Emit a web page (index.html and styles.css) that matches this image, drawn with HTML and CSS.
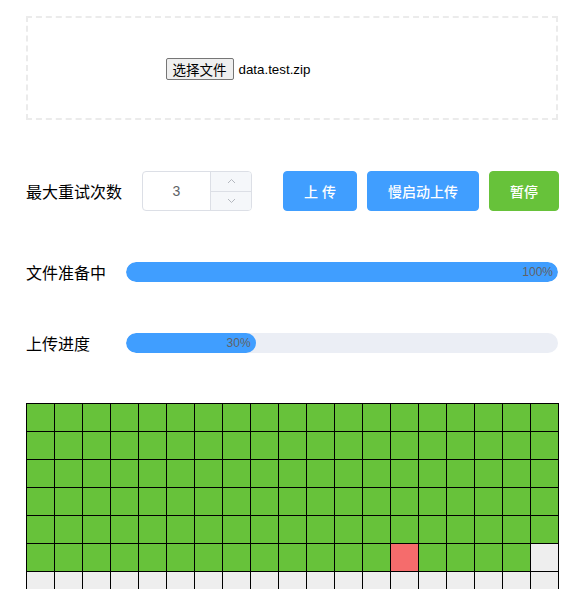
FILE: index.html
```html
<!DOCTYPE html>
<html lang="zh-CN">
<head>
<meta charset="utf-8">
<title>上传</title>
<link rel="stylesheet" href="styles.css">
</head>
<body>
<div class="page">
  <div class="upload">
    <div class="file">
      <span class="file-btn">选择文件</span><span class="file-name">data.test.zip</span>
    </div>
  </div>

  <div class="row ctrl-row">
    <span class="label">最大重试次数</span>
    <div class="num">
      <div class="num-val">3</div>
      <div class="num-ctrl">
        <div class="spin up"><svg width="9" height="6" viewBox="0 0 9 6"><path d="M1 5L4.5 1.5L8 5" fill="none" stroke="#b4b8bf" stroke-width="1"/></svg></div>
        <div class="spin down"><svg width="9" height="6" viewBox="0 0 9 6"><path d="M1 1L4.5 4.5L8 1" fill="none" stroke="#b4b8bf" stroke-width="1"/></svg></div>
      </div>
    </div>
    <div class="btns">
      <button class="btn primary">上 传</button>
      <button class="btn primary">慢启动上传</button>
      <button class="btn success">暂停</button>
    </div>
  </div>

  <div class="row prog-row">
    <span class="plabel">文件准备中</span>
    <div class="track"><div class="fill" style="width:100%"><span class="ptext">100%</span></div></div>
  </div>

  <div class="row prog-row">
    <span class="plabel">上传进度</span>
    <div class="track"><div class="fill" style="width:30%"><span class="ptext">30%</span></div></div>
  </div>

  <div class="grid">
    <i class="c ok"></i><i class="c ok"></i><i class="c ok"></i><i class="c ok"></i><i class="c ok"></i><i class="c ok"></i><i class="c ok"></i><i class="c ok"></i><i class="c ok"></i><i class="c ok"></i><i class="c ok"></i><i class="c ok"></i><i class="c ok"></i><i class="c ok"></i><i class="c ok"></i><i class="c ok"></i><i class="c ok"></i><i class="c ok"></i><i class="c ok"></i>
    <i class="c ok"></i><i class="c ok"></i><i class="c ok"></i><i class="c ok"></i><i class="c ok"></i><i class="c ok"></i><i class="c ok"></i><i class="c ok"></i><i class="c ok"></i><i class="c ok"></i><i class="c ok"></i><i class="c ok"></i><i class="c ok"></i><i class="c ok"></i><i class="c ok"></i><i class="c ok"></i><i class="c ok"></i><i class="c ok"></i><i class="c ok"></i>
    <i class="c ok"></i><i class="c ok"></i><i class="c ok"></i><i class="c ok"></i><i class="c ok"></i><i class="c ok"></i><i class="c ok"></i><i class="c ok"></i><i class="c ok"></i><i class="c ok"></i><i class="c ok"></i><i class="c ok"></i><i class="c ok"></i><i class="c ok"></i><i class="c ok"></i><i class="c ok"></i><i class="c ok"></i><i class="c ok"></i><i class="c ok"></i>
    <i class="c ok"></i><i class="c ok"></i><i class="c ok"></i><i class="c ok"></i><i class="c ok"></i><i class="c ok"></i><i class="c ok"></i><i class="c ok"></i><i class="c ok"></i><i class="c ok"></i><i class="c ok"></i><i class="c ok"></i><i class="c ok"></i><i class="c ok"></i><i class="c ok"></i><i class="c ok"></i><i class="c ok"></i><i class="c ok"></i><i class="c ok"></i>
    <i class="c ok"></i><i class="c ok"></i><i class="c ok"></i><i class="c ok"></i><i class="c ok"></i><i class="c ok"></i><i class="c ok"></i><i class="c ok"></i><i class="c ok"></i><i class="c ok"></i><i class="c ok"></i><i class="c ok"></i><i class="c ok"></i><i class="c ok"></i><i class="c ok"></i><i class="c ok"></i><i class="c ok"></i><i class="c ok"></i><i class="c ok"></i>
    <i class="c ok"></i><i class="c ok"></i><i class="c ok"></i><i class="c ok"></i><i class="c ok"></i><i class="c ok"></i><i class="c ok"></i><i class="c ok"></i><i class="c ok"></i><i class="c ok"></i><i class="c ok"></i><i class="c ok"></i><i class="c ok"></i><i class="c err"></i><i class="c ok"></i><i class="c ok"></i><i class="c ok"></i><i class="c ok"></i><i class="c wait"></i>
    <i class="c wait"></i><i class="c wait"></i><i class="c wait"></i><i class="c wait"></i><i class="c wait"></i><i class="c wait"></i><i class="c wait"></i><i class="c wait"></i><i class="c wait"></i><i class="c wait"></i><i class="c wait"></i><i class="c wait"></i><i class="c wait"></i><i class="c wait"></i><i class="c wait"></i><i class="c wait"></i><i class="c wait"></i><i class="c wait"></i><i class="c wait"></i>
  </div>
</div>
</body>
</html>
```

FILE: styles.css
```css
* { box-sizing: border-box; }
html, body { margin: 0; padding: 0; background: #fff; }
body {
  font-family: "Liberation Sans", "Noto Sans CJK SC", sans-serif;
  color: #000;
}
.page {
  width: 532px;
  margin-left: 26px;
  padding-top: 16px;
}
.upload {
  height: 104px;
  border: 2px dashed #ebebeb;
  display: flex;
  align-items: center;
  justify-content: center;
}
.file {
  width: 253px;
  display: flex;
  align-items: center;
  font-size: 13.33px;
  margin-top: 2px;
}
.file-btn {
  height: 22px;
  line-height: 20px;
  padding: 0 6px;
  border: 1px solid #767676;
  border-radius: 2px;
  background: #efefef;
  color: #000;
  font-family: "Noto Sans CJK SC", sans-serif;
  font-size: 13.5px;
  margin-right: 5px;
}
.file-name { color: #000; }
.row { display: flex; align-items: center; }
.ctrl-row { margin-top: 51px; height: 40px; }
.ctrl-row > * { flex-shrink: 0; }
.label {
  font-family: "Noto Sans CJK SC", sans-serif;
  font-size: 16px;
  width: 116px;
  line-height: 20px;
}
.num {
  width: 110px;
  height: 40px;
  border: 1px solid #dcdfe6;
  border-radius: 4px;
  display: flex;
  overflow: hidden;
}
.num-val {
  flex: 1;
  text-align: center;
  line-height: 38px;
  font-size: 14px;
  color: #606266;
}
.num-ctrl {
  width: 41px;
  border-left: 1px solid #dcdfe6;
  background: #f5f7fa;
  display: flex;
  flex-direction: column;
}
.spin {
  flex: 1;
  display: flex;
  align-items: center;
  justify-content: center;
}
.spin.up { border-bottom: 1px solid #dcdfe6; }
.spin svg { display: block; }
.btns { display: flex; gap: 10px; margin-left: 31px; }
.btn {
  height: 40px;
  padding: 0 20px;
  border-radius: 4px;
  font-family: "Liberation Sans", "Noto Sans CJK SC", sans-serif;
  font-size: 14px;
  font-weight: 500;
  color: #fff;
  cursor: pointer;
  white-space: nowrap;
  flex-shrink: 0;
}
.primary { background: #409eff; border: 1px solid #409eff; }
.success { background: #67c23a; border: 1px solid #67c23a; }
.prog-row { margin-top: 51px; height: 20px; }
.plabel {
  font-family: "Noto Sans CJK SC", sans-serif;
  font-size: 16px;
  width: 100px;
  line-height: 20px;
}
.track {
  flex: 1;
  height: 20px;
  border-radius: 10px;
  background: #ebeef5;
  overflow: hidden;
}
.fill {
  height: 20px;
  border-radius: 10px;
  background: #409eff;
  text-align: right;
}
.ptext {
  display: inline-block;
  margin: 0 5px;
  font-size: 12px;
  line-height: 20px;
  color: #606266;
}
.grid {
  margin-top: 50px;
  display: grid;
  grid-template-columns: repeat(19, 28px);
  width: 533px;
  border-left: 1px solid #000;
  border-top: 1px solid #000;
}
.c {
  display: block;
  height: 28px;
  border-right: 1px solid #000;
  border-bottom: 1px solid #000;
}
.ok { background: #67c23a; }
.err { background: #f56c6c; }
.wait { background: #eeeeee; }
```
